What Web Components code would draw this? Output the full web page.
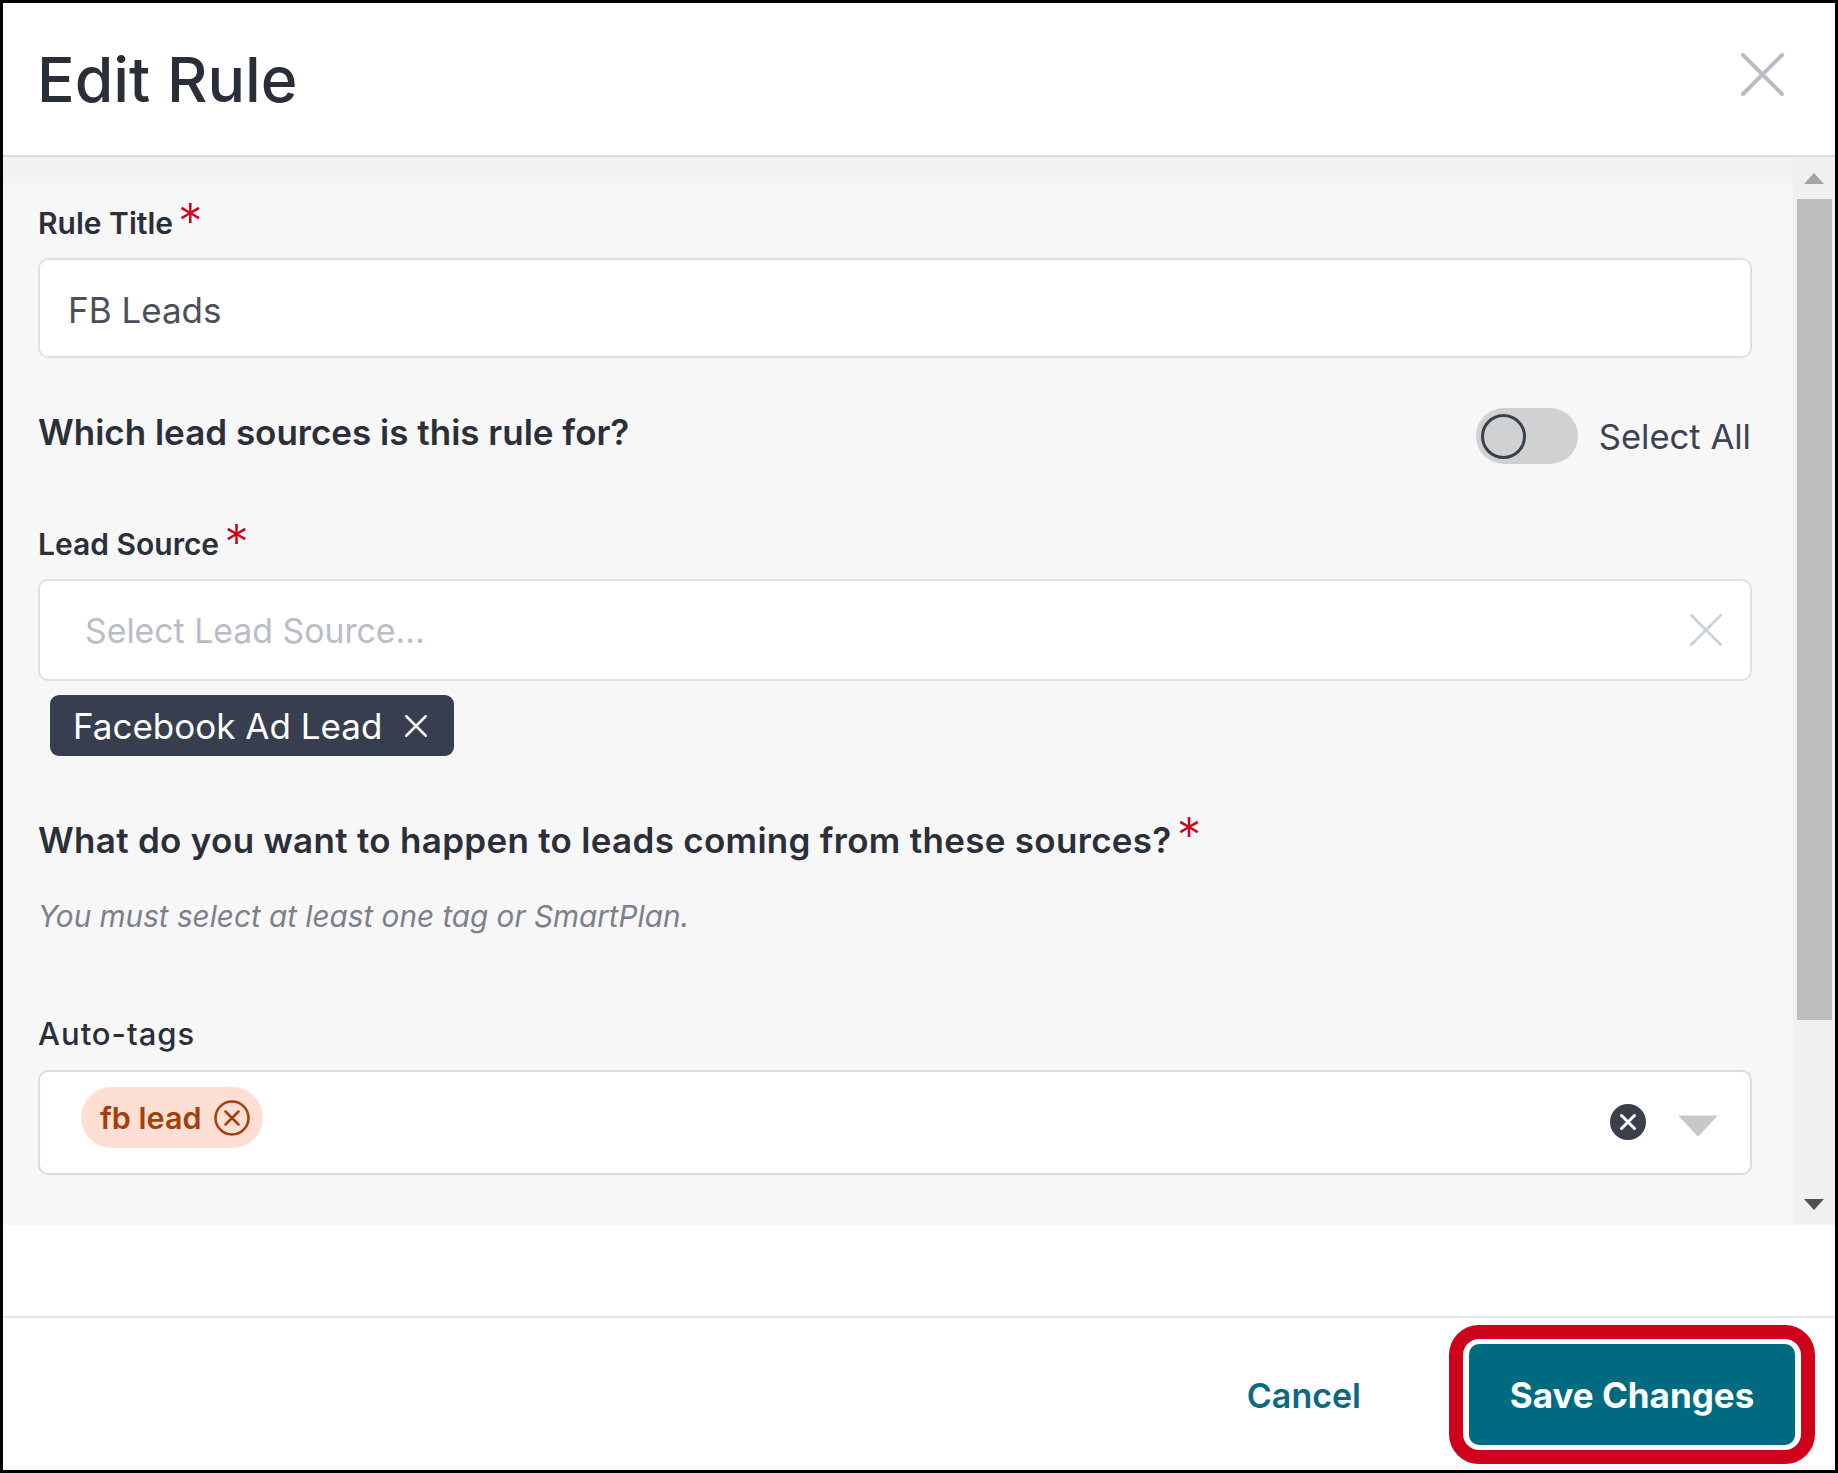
<!DOCTYPE html>
<html>
<head>
<meta charset="utf-8">
<title>Edit Rule</title>
<style>
    html, body { margin: 0; padding: 0; background: #fff; }
    body { font-family: Inter, "Noto Sans", sans-serif; color: #2b2f3a; }
</style>
</head>
<body>
<edit-rule-dialog>
    <dialog-header slot="header">Edit Rule</dialog-header>

    <form-label style="margin-top: 46px;" required>Rule Title</form-label>
    <field-box style="height: 100px;"><span style="color: #4b4f59; font-size: 35px; padding: 3px 0 0 28px;">FB Leads</span></field-box>

    <lead-source-row style="margin-top: 50px;">
        <span slot="question">Which lead sources is this rule for?</span>
        <toggle-switch>Select All</toggle-switch>
    </lead-source-row>

    <form-label style="margin-top: 60px;" required>Lead Source</form-label>
    <field-box style="height: 102px;" clear>
        <span style="color: #b9bdc6; font-size: 33.8px; padding-left: 45px;">Select Lead Source...</span>
    </field-box>
    <source-chip style="margin: 14px 0 0 12px;">Facebook Ad Lead</source-chip>

    <form-label style="margin-top: 64px; letter-spacing: 0.3px;" large required>What do you want to happen to leads coming from these sources?</form-label>
    <hint-text style="margin-top: 36px;">You must select at least one tag or SmartPlan.</hint-text>

    <form-label style="margin-top: 78px; padding-bottom: 16px; font-size: 31px; font-weight: 500; letter-spacing: 1px;">Auto-tags</form-label>
    <tag-field>
        <tag-chip>fb lead</tag-chip>
    </tag-field>
    <dialog-footer slot="footer">
        <span slot="cancel">Cancel</span>
        <span slot="save">Save Changes</span>
    </dialog-footer>
</edit-rule-dialog>

<script>
// thin X used by the close buttons and chips
function crossIcon(size, color, width) {
    return `<svg width="${size}" height="${size}" viewBox="0 0 ${size} ${size}" style="display:block;flex:none">
        <path d="M${width/2} ${width/2} L${size-width/2} ${size-width/2} M${size-width/2} ${width/2} L${width/2} ${size-width/2}"
            stroke="${color}" stroke-width="${width}" stroke-linecap="round" fill="none"/></svg>`;
}

class EditRuleDialog extends HTMLElement {
    constructor() {
        super();
        this.attachShadow({ mode: "open" });
        this.shadowRoot.innerHTML = `
            <style>
                :host {
                    display: flex;
                    flex-direction: column;
                    box-sizing: border-box;
                    width: 1838px;
                    height: 1473px;
                    border: 3px solid #000;
                    background: #fff;
                    overflow: hidden;
                }
                .body {
                    display: flex;
                    height: 1068px;
                    flex: none;
                    background: #f7f7f7;
                }
                .content {
                    flex: 1;
                    min-width: 0;
                    box-sizing: border-box;
                    padding: 0 41px 0 35px;
                    background: linear-gradient(#f0f0f0, #f7f7f7 42px);
                }
                .spacer { flex: 1; }
            </style>
            <slot name="header"></slot>
            <div class="body">
                <div class="content"><slot></slot></div>
                <scroll-rail></scroll-rail>
            </div>
            <div class="spacer"></div>
            <slot name="footer"></slot>
        `;
    }
}
customElements.define("edit-rule-dialog", EditRuleDialog);

class DialogHeader extends HTMLElement {
    constructor() {
        super();
        this.attachShadow({ mode: "open" });
        this.shadowRoot.innerHTML = `
            <style>
                :host {
                    display: flex;
                    align-items: center;
                    justify-content: space-between;
                    box-sizing: border-box;
                    height: 154px;
                    padding: 0 51px 9px 34px;
                    border-bottom: 2px solid #dddddd;
                    flex: none;
                }
                .title { font-size: 62.5px; font-weight: 500; color: #2a2e38; line-height: 80px; margin-top: 8px; }
            </style>
            <span class="title"><slot></slot></span>
            ${crossIcon(43, "#b9bcc3", 4)}
        `;
    }
}
customElements.define("dialog-header", DialogHeader);

class ScrollRail extends HTMLElement {
    constructor() {
        super();
        this.attachShadow({ mode: "open" });
        this.shadowRoot.innerHTML = `
            <style>
                :host {
                    display: flex;
                    flex-direction: column;
                    align-items: center;
                    box-sizing: border-box;
                    width: 42px;
                    flex: none;
                    background: #f0f0f0;
                    padding: 16px 0 15px;
                }
                .up, .down { width: 0; height: 0; border-left: 10px solid transparent; border-right: 10px solid transparent; }
                .up { border-bottom: 11px solid #a3a3a3; }
                .down { border-top: 11px solid #505050; }
                .thumb { width: 35px; height: 821px; margin: 15px 0 auto; background: #bdbdbd; }
            </style>
            <div class="up"></div>
            <div class="thumb"></div>
            <div class="down"></div>
        `;
    }
}
customElements.define("scroll-rail", ScrollRail);

class FormLabel extends HTMLElement {
    constructor() {
        super();
        this.attachShadow({ mode: "open" });
        const large = this.hasAttribute("large");
        const star = this.hasAttribute("required") ? `<span class="star">*</span>` : "";
        this.shadowRoot.innerHTML = `
            <style>
                :host {
                    display: flex;
                    align-items: flex-start;
                    color: #2b2f3a;
                    font-size: ${large ? 35 : 30}px;
                    font-weight: 600;
                    line-height: 40px;
                    white-space: nowrap;
                    padding-bottom: ${large ? 0 : 15}px;
                }
                .star {
                    color: #d0021b;
                    font-size: 49px;
                    font-weight: 300;
                    letter-spacing: 0;
                    line-height: 40px;
                    margin: ${large ? -4 : -1}px 0 0 5px;
                }
            </style>
            <span><slot></slot></span>${star}
        `;
    }
}
customElements.define("form-label", FormLabel);

class FieldBox extends HTMLElement {
    constructor() {
        super();
        this.attachShadow({ mode: "open" });
        this.shadowRoot.innerHTML = `
            <style>
                :host {
                    display: flex;
                    align-items: center;
                    justify-content: space-between;
                    box-sizing: border-box;
                    background: #fff;
                    border: 2px solid #dfe1e4;
                    border-radius: 10px;
                    padding-right: 28px;
                }
            </style>
            <slot></slot>
            ${this.hasAttribute("clear") ? crossIcon(32, "#ccd2d8", 3) : ""}
        `;
    }
}
customElements.define("field-box", FieldBox);

class LeadSourceRow extends HTMLElement {
    constructor() {
        super();
        this.attachShadow({ mode: "open" });
        this.shadowRoot.innerHTML = `
            <style>
                :host {
                    display: flex;
                    align-items: flex-start;
                    justify-content: space-between;
                    height: 56px;
                    font-size: 35px;
                    font-weight: 600;
                    color: #2b2f3a;
                }
                ::slotted([slot="question"]) { margin-top: 4px; line-height: 40px; }
            </style>
            <slot name="question"></slot>
            <slot></slot>
        `;
    }
}
customElements.define("lead-source-row", LeadSourceRow);

class ToggleSwitch extends HTMLElement {
    constructor() {
        super();
        this.attachShadow({ mode: "open" });
        this.shadowRoot.innerHTML = `
            <style>
                :host {
                    display: flex;
                    align-items: center;
                    justify-content: space-between;
                    box-sizing: border-box;
                    width: 276px;
                    padding-right: 1px;
                    font-size: 34.6px;
                    font-weight: 400;
                    color: #3b4252;
                }
                .track {
                    display: flex;
                    align-items: center;
                    box-sizing: border-box;
                    width: 102px;
                    height: 56px;
                    padding-left: 5px;
                    border-radius: 28px;
                    background: #d0d1d3;
                }
                .knob {
                    box-sizing: border-box;
                    width: 45px;
                    height: 45px;
                    border: 3px solid #3a3f4c;
                    border-radius: 50%;
                }
            </style>
            <span class="track"><span class="knob"></span></span>
            <span><slot></slot></span>
        `;
    }
}
customElements.define("toggle-switch", ToggleSwitch);

class SourceChip extends HTMLElement {
    constructor() {
        super();
        this.attachShadow({ mode: "open" });
        this.shadowRoot.innerHTML = `
            <style>
                :host {
                    display: flex;
                    align-items: center;
                    justify-content: space-between;
                    box-sizing: border-box;
                    width: 404px;
                    height: 61px;
                    padding: 0 27px 0 23px;
                    border-radius: 9px;
                    background: #373e4f;
                    color: #fff;
                    font-size: 35px;
                    white-space: nowrap;
                }
            </style>
            <span><slot></slot></span>
            ${crossIcon(22, "#fff", 2.5)}
        `;
    }
}
customElements.define("source-chip", SourceChip);

class HintText extends HTMLElement {
    constructor() {
        super();
        this.attachShadow({ mode: "open" });
        this.shadowRoot.innerHTML = `
            <style>
                :host {
                    display: block;
                    font-size: 29.7px;
                    font-style: italic;
                    line-height: 40px;
                    color: #7c8089;
                }
            </style>
            <slot></slot>
        `;
    }
}
customElements.define("hint-text", HintText);

class TagField extends HTMLElement {
    constructor() {
        super();
        this.attachShadow({ mode: "open" });
        this.shadowRoot.innerHTML = `
            <style>
                :host {
                    display: flex;
                    align-items: flex-start;
                    box-sizing: border-box;
                    height: 105px;
                    padding: 15px 32px 0 41px;
                    background: #fff;
                    border: 2px solid #d9dde1;
                    border-radius: 10px;
                }
                .controls {
                    display: flex;
                    align-items: center;
                    gap: 32px;
                    margin: 13px 0 0 auto;
                    height: 44px;
                }
                .clear {
                    display: flex;
                    align-items: center;
                    justify-content: center;
                    width: 36px;
                    height: 36px;
                    border-radius: 50%;
                    background: #3a3f4c;
                }
                .caret { display: block; margin-top: 7px; }
            </style>
            <slot></slot>
            <div class="controls">
                <span class="clear">${crossIcon(16, "#fff", 3)}</span>
                <svg class="caret" width="40" height="22" viewBox="0 0 40 22"><path d="M1 1 H39 L20 21 Z" fill="#c8c8c8" stroke="#c8c8c8" stroke-linejoin="round"/></svg>
            </div>
        `;
    }
}
customElements.define("tag-field", TagField);

class TagChip extends HTMLElement {
    constructor() {
        super();
        this.attachShadow({ mode: "open" });
        this.shadowRoot.innerHTML = `
            <style>
                :host {
                    display: inline-flex;
                    align-items: center;
                    justify-content: space-between;
                    box-sizing: border-box;
                    width: 182px;
                    height: 61px;
                    padding: 0 13px 0 19px;
                    border-radius: 31px;
                    background: #fde0d3;
                    color: #a33f0a;
                    font-size: 30.5px;
                    font-weight: 600;
                    white-space: nowrap;
                }
                svg { display: block; flex: none; }
            </style>
            <span><slot></slot></span>
            <svg width="36" height="36" viewBox="0 0 36 36">
                <circle cx="18" cy="18" r="16.5" fill="none" stroke="#a33f0a" stroke-width="2.5"/>
                <path d="M11.5 11.5 L24.5 24.5 M24.5 11.5 L11.5 24.5" stroke="#a33f0a" stroke-width="2.5" stroke-linecap="round"/>
            </svg>
        `;
    }
}
customElements.define("tag-chip", TagChip);

class DialogFooter extends HTMLElement {
    constructor() {
        super();
        this.attachShadow({ mode: "open" });
        this.shadowRoot.innerHTML = `
            <style>
                :host {
                    display: flex;
                    align-items: center;
                    justify-content: flex-end;
                    box-sizing: border-box;
                    height: 154px;
                    flex: none;
                    padding-right: 20px;
                    border-top: 2px solid #e4e4e4;
                }
                .cancel { color: #0a6b80; font-size: 34px; font-weight: 600; margin-right: 88px; padding-top: 2px; }
                .ring {
                    box-sizing: border-box;
                    width: 366px;
                    height: 139px;
                    padding: 5px 6px;
                    border: 14px solid #d0021b;
                    border-radius: 30px;
                    background: #fff;
                }
                .save {
                    display: flex;
                    align-items: center;
                    justify-content: center;
                    box-sizing: border-box;
                    height: 100%;
                    padding-top: 2px;
                    border-radius: 10px;
                    background: #006b80;
                    color: #fff;
                    font-size: 35px;
                    font-weight: 700;
                }
            </style>
            <span class="cancel"><slot name="cancel"></slot></span>
            <div class="ring"><div class="save"><slot name="save"></slot></div></div>
        `;
    }
}
customElements.define("dialog-footer", DialogFooter);
</script>
</body>
</html>
